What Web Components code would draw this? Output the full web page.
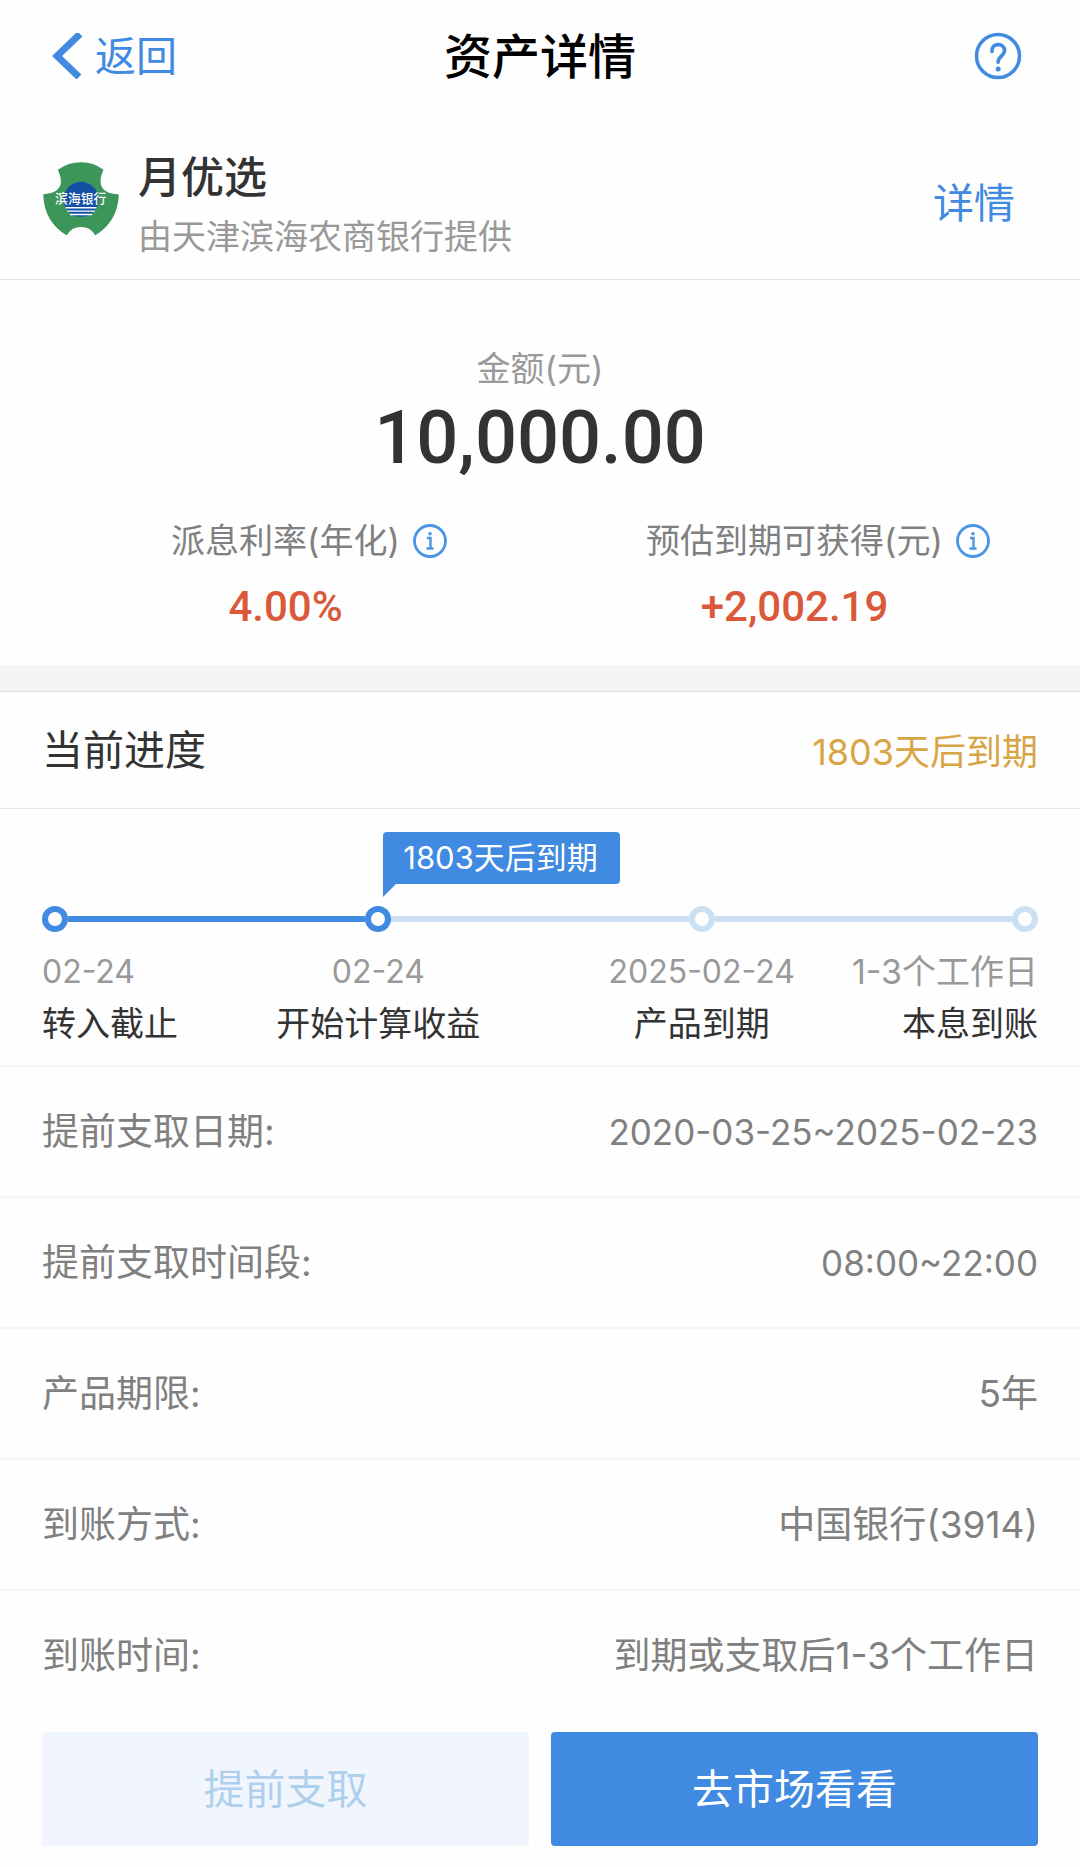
<!DOCTYPE html>
<html lang="zh-CN">
<head>
<meta charset="UTF-8">
<meta name="viewport" content="width=device-width, initial-scale=1">
<title>资产详情</title>
<style>
  :root {
    --blue: #408ae1;
    --blue-light: #cbe0f3;
    --dark: #333;
    --grey: #808080;
    --grey-light: #999;
    --side: 42px;
    --font-text: Inter, "Noto Sans CJK SC", sans-serif;
    --font-number: Roboto, "Noto Sans CJK SC", sans-serif;
  }

  body {
    margin: 0;
    background: #fefefe;
    color: var(--dark);
    font-family: var(--font-text);
  }
</style>
</head>
<body>
<asset-page>
  <nav-header slot="header">资产详情</nav-header>

  <product-header>
    <span slot="name">月优选</span>
    <span slot="provider">由天津滨海农商银行提供</span>
  </product-header>

  <asset-summary>
    <span slot="label">金额(元)</span>
    <span slot="amount">10,000.00</span>
    <summary-item>
      <span slot="label">派息利率(年化)</span>
      4.00%
    </summary-item>
    <summary-item>
      <span slot="label">预估到期可获得(元)</span>
      +2,002.19
    </summary-item>
  </asset-summary>

  <section-title>
    当前进度
    <span slot="extra">1803天后到期</span>
  </section-title>

  <progress-steps>
    <progress-step state="done" numeric>
      <span slot="date">02-24</span>转入截止
    </progress-step>
    <progress-step state="current" numeric>
      <span slot="tag">1803天后到期</span>
      <span slot="date">02-24</span>开始计算收益
    </progress-step>
    <progress-step numeric>
      <span slot="date">2025-02-24</span>产品到期
    </progress-step>
    <progress-step>
      <span slot="date">1-3个工作日</span>本息到账
    </progress-step>
  </progress-steps>

  <info-row label="提前支取日期:" numeric>2020-03-25~2025-02-23</info-row>
  <info-row label="提前支取时间段:" numeric>08:00~22:00</info-row>
  <info-row label="产品期限:">5年</info-row>
  <info-row label="到账方式:">中国银行(3914)</info-row>
  <info-row label="到账时间:">到期或支取后1-3个工作日</info-row>

  <action-bar slot="footer">
    <action-button disabled>提前支取</action-button>
    <action-button>去市场看看</action-button>
  </action-bar>
</asset-page>

<script>
// Small base class, every element only supplies its template
class BaseElement extends HTMLElement {
  constructor() {
    super();
    this.attachShadow({ mode: "open" });
  }

  connectedCallback() {
    this.shadowRoot.innerHTML = this.template();
  }
}

class AssetPage extends BaseElement {
  template() {
    return `
      <style>
        :host { display: block; }
      </style>
      <slot name="header"></slot>
      <main><slot></slot></main>
      <slot name="footer"></slot>
    `;
  }
}

class NavHeader extends BaseElement {
  template() {
    return `
      <style>
        :host { display: block; }
        header {
          display: grid;
          grid-template-columns: 1fr auto 1fr;
          align-items: center;
          height: 112px;
          padding: 0 52px;
        }
        a {
          display: flex;
          align-items: center;
          gap: 12px;
          color: var(--blue);
          font-size: 41px;
          line-height: 60px;
          text-decoration: none;
        }
        h1 {
          margin: 0;
          padding-top: 2px;
          color: #000;
          font-size: 48px;
          font-weight: 500;
          line-height: 60px;
        }
        button {
          justify-self: end;
          padding: 0 6px 0 0;
          border: 0;
          background: none;
          color: var(--blue);
        }
        svg { display: block; }
      </style>
      <header>
        <a href="#">
          <svg width="31" height="46" viewBox="0 0 31 46" fill="none" stroke="currentColor" stroke-width="7">
            <path d="M28 1 5 23l22 21"/>
          </svg>
          返回
        </a>
        <h1><slot></slot></h1>
        <button type="button" aria-label="帮助">
          <svg width="48" height="48" viewBox="0 0 48 48" fill="none" stroke="currentColor" stroke-linecap="round">
            <circle cx="24" cy="24" r="21.5" stroke-width="3.5"/>
            <path d="M18 19.500c-.4-4.600 2.400-6.900 6.200-6.900s6.400 2.500 6.400 6c0 4.900-6.400 6.200-6.400 10.900v.8" stroke-width="3.6"/>
            <circle cx="24.2" cy="37" r="2.500" fill="currentColor" stroke="none"/>
          </svg>
        </button>
      </header>
    `;
  }
}

class ProductHeader extends BaseElement {
  template() {
    return `
      <style>
        :host {
          display: flex;
          align-items: center;
          gap: 19px;
          padding: 35px 65px 15px 43px;
          border-bottom: 1px solid #e1e1e1;
        }
        .logo { flex: none; margin-bottom: 14px; }
        .text { flex: 1; }
        .name {
          margin: 0;
          font-size: 43px;
          font-weight: 500;
          line-height: 60px;
        }
        .provider {
          margin: 2px 0 0;
          color: var(--grey-light);
          font-size: 34px;
          line-height: 55px;
        }
        a {
          margin-bottom: 6px;
          color: var(--blue);
          font-size: 41px;
          line-height: 60px;
          text-decoration: none;
        }
      </style>
      <svg class="logo" width="76" height="74" viewBox="42 37 226 220">
        <path fill="#3c965a" d="M86 60Q118 38 155 38T222 60C210 86 200 130 267 133C267 185 240 232 197 255Q184 230 155 230T113 255C70 232 43 185 43 133C110 128 98 86 86 60Z"/>
        <circle cx="155" cy="148" r="52" fill="#1450a5"/>
        <path stroke="#fff" stroke-width="4" d="M109 173h92M114 183h82M122 193h66"/>
        <text x="154" y="160" text-anchor="middle" font-size="38" font-weight="500" fill="#fff">滨海银行</text>
      </svg>
      <div class="text">
        <h2 class="name"><slot name="name"></slot></h2>
        <p class="provider"><slot name="provider"></slot></p>
      </div>
      <a href="#">详情</a>
    `;
  }
}

class AssetSummary extends BaseElement {
  template() {
    return `
      <style>
        :host {
          display: block;
          padding: 65px 31px 31px;
          border-bottom: 26px solid #f5f5f7;
          text-align: center;
        }
        .label {
          color: var(--grey-light);
          font-size: 34px;
          line-height: 48px;
        }
        .amount {
          font-family: var(--font-number);
          font-size: 74px;
          font-weight: 500;
          line-height: 90px;
        }
        .items {
          display: grid;
          grid-template-columns: 1fr 1fr;
          margin-top: 34px;
        }
      </style>
      <div class="label"><slot name="label"></slot></div>
      <div class="amount"><slot name="amount"></slot></div>
      <div class="items"><slot></slot></div>
    `;
  }
}

class SummaryItem extends BaseElement {
  template() {
    return `
      <style>
        :host { display: block; }
        .label {
          display: flex;
          align-items: center;
          justify-content: center;
          color: var(--grey);
          font-size: 34px;
          line-height: 48px;
        }
        /* the icon hangs after the label, so the label stays centred over the value */
        button {
          margin: 0 -47px 0 13px;
          padding: 0;
          border: 0;
          background: none;
          color: #4a95e6;
        }
        svg { display: block; }
        .value {
          margin-top: 14px;
          color: #d9593a;
          font-family: var(--font-number);
          font-size: 42px;
          font-weight: 500;
          line-height: 55px;
        }
      </style>
      <div class="label">
        <slot name="label"></slot>
        <button type="button" aria-label="说明">
          <svg width="34" height="34" viewBox="0 0 34 34" fill="none" stroke="currentColor">
            <circle cx="17" cy="17" r="15.5" stroke-width="2.8"/>
            <path d="M14 14h3.500v10M13.500 24.500h7" stroke-width="2.400"/>
            <circle cx="17" cy="9.800" r="1.800" fill="currentColor" stroke="none"/>
          </svg>
        </button>
      </div>
      <div class="value"><slot></slot></div>
    `;
  }
}

class SectionTitle extends BaseElement {
  template() {
    return `
      <style>
        :host {
          display: flex;
          align-items: center;
          justify-content: space-between;
          height: 116px;
          padding: 0 var(--side);
          border-top: 1px solid #e1e1e1;
          border-bottom: 1px solid #e6e6e6;
        }
        h2 {
          margin: 0;
          font-size: 41px;
          font-weight: 400;
          line-height: 60px;
        }
        .extra {
          padding-top: 4px;
          color: #d8a545;
          font-size: 36px;
          line-height: 60px;
        }
      </style>
      <h2><slot></slot></h2>
      <span class="extra"><slot name="extra"></slot></span>
    `;
  }
}

class ProgressSteps extends BaseElement {
  template() {
    return `
      <style>
        :host {
          display: flex;
          padding: 97px var(--side) 19px;
          border-bottom: 2px solid #f5f5f5;
        }
        ::slotted(*) { flex: 1; }
        ::slotted(:last-child) { flex: none; }
      </style>
      <slot></slot>
    `;
  }
}

class ProgressStep extends BaseElement {
  template() {
    return `
      <style>
        :host {
          --step: var(--blue-light);
          --line: var(--blue-light);
          --align: center;
          display: block;
          white-space: nowrap;
        }
        :host([state]) { --step: var(--blue); }
        :host([state="done"]) { --line: var(--blue); }
        :host(:first-child) { --align: flex-start; }
        :host(:last-child) { --align: flex-end; }
        .track {
          display: flex;
          align-items: center;
        }
        .dot {
          position: relative;
          box-sizing: border-box;
          width: 26px;
          height: 26px;
          border: 6px solid var(--step);
          border-radius: 50%;
        }
        .line {
          flex: 1;
          height: 6px;
          background: var(--line);
        }
        :host(:last-child) .line { display: none; }
        /* as wide as the dot, the texts spill over evenly */
        .text {
          display: flex;
          flex-direction: column;
          align-items: var(--align);
          gap: 8px;
          width: 26px;
          margin-top: 18px;
          line-height: 44px;
          font-size: 34px;
        }
        .date { color: var(--grey-light); }
        :host([numeric]) .date { font-size: 32px; }
        .tag {
          position: absolute;
          left: 12px;
          bottom: 42px;
          padding: 0 22px 0 20px;
          border-radius: 4px 4px 4px 0;
          background: var(--blue);
          color: #fff;
          font-size: 31px;
          line-height: 52px;
        }
        .tag::after {
          content: "";
          position: absolute;
          top: 100%;
          left: 0;
          border-top: 13px solid var(--blue);
          border-right: 13px solid transparent;
        }
        :host(:not([state="current"])) .tag { display: none; }
      </style>
      <div class="track">
        <div class="dot"><div class="tag"><slot name="tag"></slot></div></div>
        <div class="line"></div>
      </div>
      <div class="text">
        <span class="date"><slot name="date"></slot></span>
        <span><slot></slot></span>
      </div>
    `;
  }
}

class InfoRow extends BaseElement {
  template() {
    return `
      <style>
        :host {
          display: flex;
          align-items: center;
          justify-content: space-between;
          height: 129px;
          padding: 0 var(--side);
          border-bottom: 2px solid #f5f5f5;
          color: var(--grey);
          font-size: 37px;
          line-height: 60px;
        }
        :host(:last-of-type) { border-bottom-color: transparent; }
        :host([numeric]) .value { font-size: 35px; }
      </style>
      <span class="label">${this.getAttribute("label")}</span>
      <span class="value"><slot></slot></span>
    `;
  }
}

class ActionBar extends BaseElement {
  template() {
    return `
      <style>
        :host {
          display: grid;
          grid-template-columns: 1fr 1fr;
          gap: 22px;
          padding: 10px var(--side) 20px;
        }
      </style>
      <slot></slot>
    `;
  }
}

class ActionButton extends BaseElement {
  template() {
    return `
      <style>
        :host { display: block; }
        button {
          display: block;
          width: 100%;
          height: 114px;
          padding: 0;
          border: 0;
          border-radius: 4px;
          background: var(--blue);
          color: #fff;
          font-family: inherit;
          font-size: 41px;
          line-height: 60px;
        }
        button:disabled {
          background: #f1f6fe;
          color: #aed0ec;
        }
      </style>
      <button type="button" ${this.hasAttribute("disabled") ? "disabled" : ""}><slot></slot></button>
    `;
  }
}

customElements.define("asset-page", AssetPage);
customElements.define("nav-header", NavHeader);
customElements.define("product-header", ProductHeader);
customElements.define("asset-summary", AssetSummary);
customElements.define("summary-item", SummaryItem);
customElements.define("section-title", SectionTitle);
customElements.define("progress-steps", ProgressSteps);
customElements.define("progress-step", ProgressStep);
customElements.define("info-row", InfoRow);
customElements.define("action-bar", ActionBar);
customElements.define("action-button", ActionButton);
</script>
</body>
</html>
